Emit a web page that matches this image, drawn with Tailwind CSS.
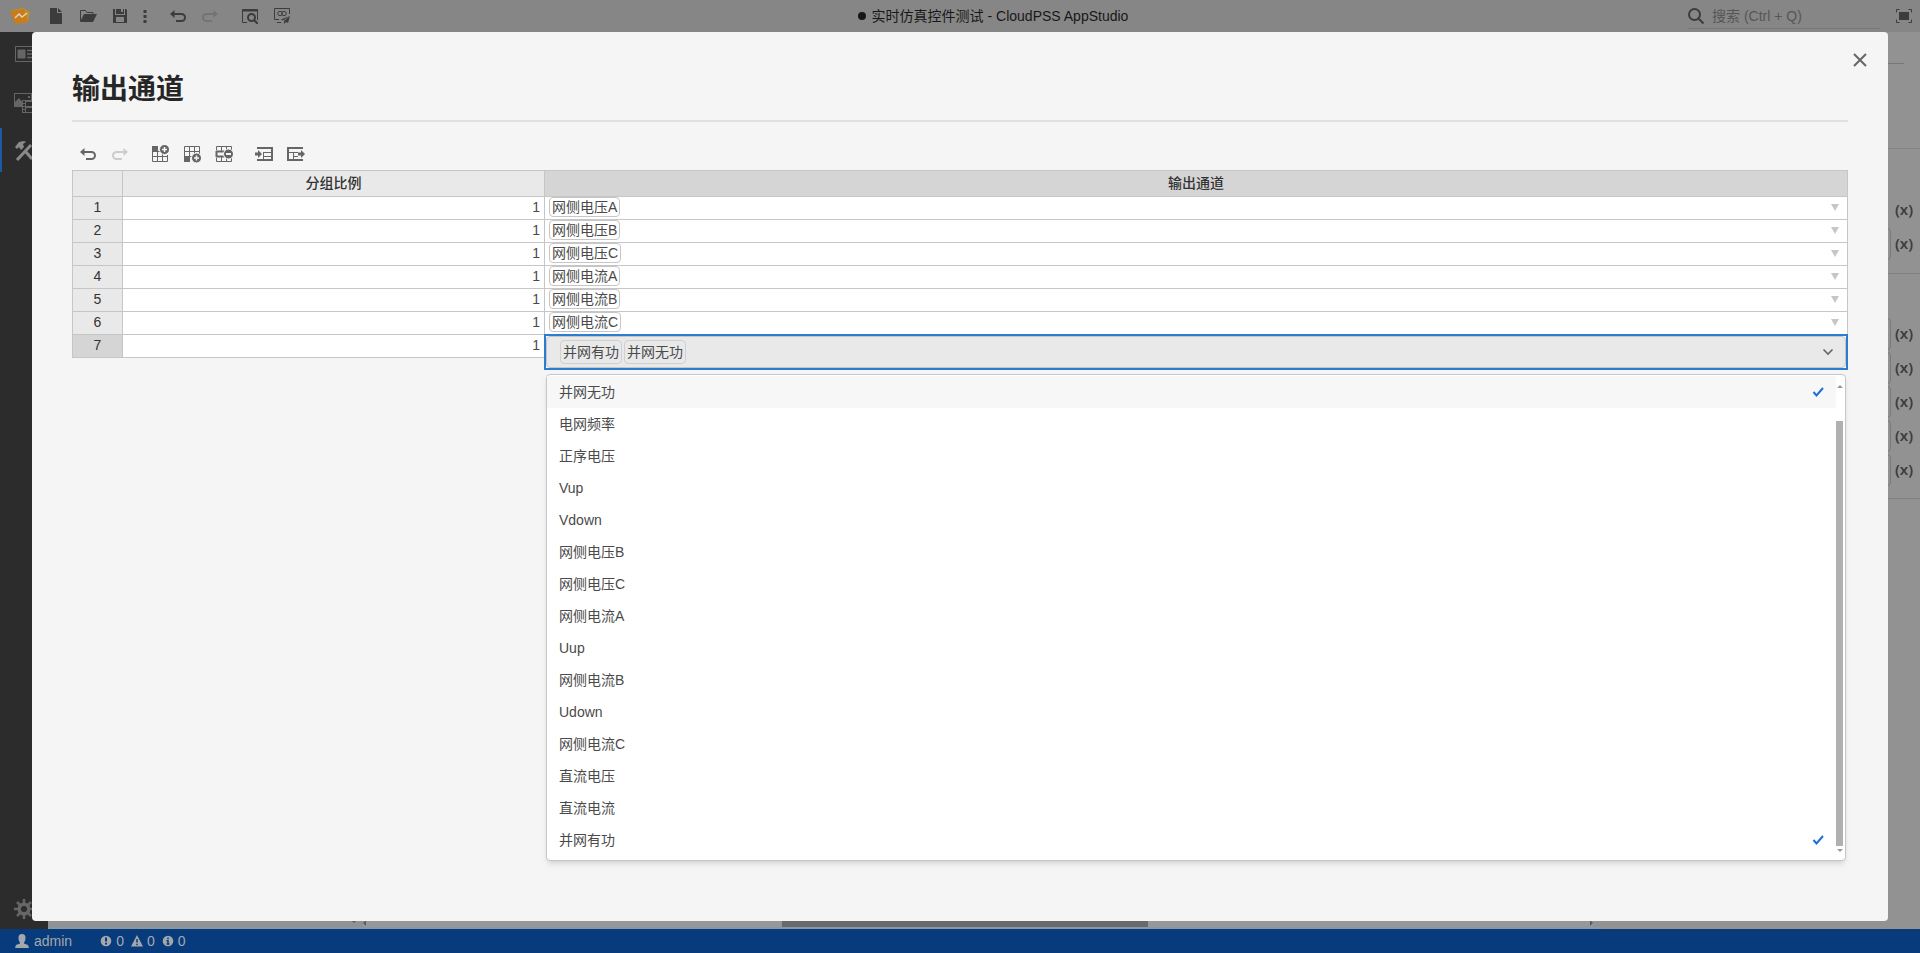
<!DOCTYPE html>
<html lang="zh-CN">
<head>
<meta charset="utf-8">
<meta name="viewport" content="width=device-width, initial-scale=1">
<title>实时仿真控件测试 - CloudPSS AppStudio</title>
<script src="https://cdn.jsdelivr.net/npm/@tailwindcss/browser@4"></script>
</head>
<body class="h-screen overflow-hidden flex flex-col bg-[#929292] text-sm text-[#333] font-['Liberation_Sans','Noto_Sans_CJK_SC',sans-serif]">

<svg class="hidden" aria-hidden="true">
  <symbol id="undo" viewBox="0 0 16 16"><path d="M0 6 4.500 2v8z" fill="currentColor"/><path d="M3 6h8.500a3.500 3.500 0 0 1 0 7H6" fill="none" stroke="currentColor" stroke-width="2"/></symbol>
</svg>

<header class="h-8 shrink-0 flex items-center bg-[#868686] text-[#3c3c3c]">
  <div class="w-10 flex justify-center">
    <svg class="w-5 h-5" viewBox="0 0 20 20"><path d="M2 4 13 2l7 4-2 10-12 2z" fill="#c08f2a"/><path d="M0 5 14 3l4 13-13 2z" fill="#c97c1a"/><path d="m5 12 4-4 3 3 5-4" fill="none" stroke="#e0d4bc" stroke-width="1.500"/></svg>
  </div>
  <button class="w-8 h-8 grid place-items-center" aria-label="新建"><svg class="w-4 h-4" viewBox="0 0 16 16" fill="currentColor"><path d="M2 0h7v5h5v11H2zM10 0l4 4h-4z"/></svg></button>
  <button class="w-8 h-8 grid place-items-center" aria-label="打开"><svg class="w-[18px] h-4" viewBox="0 0 18 16"><path d="M1.500 13V2.500h5l1.500 2h6V7" fill="none" stroke="currentColor"/><path d="M5 6h13l-4 8H1z" fill="currentColor"/></svg></button>
  <button class="w-8 h-8 grid place-items-center" aria-label="保存"><svg class="w-4 h-4" viewBox="0 0 16 16"><path fill="currentColor" fill-rule="evenodd" d="M1 1h2v6h10V1h1l1 1v13H1zM4 1h5v3h2V1h1v5H4zM4 9v5h8V9z"/></svg></button>
  <button class="w-[18px] h-8 grid place-items-center" aria-label="更多"><svg class="w-4 h-4" viewBox="0 0 16 16" fill="currentColor"><path d="M6.500 2h3v3h-3zM6.500 7h3v3h-3zM6.500 12h3v3h-3z"/></svg></button>
  <button class="ml-2 w-8 h-8 grid place-items-center" aria-label="撤销"><svg class="w-4 h-4"><use href="#undo"/></svg></button>
  <button class="w-8 h-8 grid place-items-center text-[#747474]" aria-label="重做"><svg class="w-4 h-4 -scale-x-100"><use href="#undo"/></svg></button>
  <button class="ml-2 w-8 h-8 grid place-items-center" aria-label="预览"><svg class="w-4 h-4" viewBox="0 0 16 16" fill="none" stroke="currentColor"><path d="M5 14.500H.5V1.500h15V12"/><path d="M0 2.500h16" stroke-width="2"/><circle cx="9.500" cy="9.500" r="3.500" stroke-width="2"/><path d="m12 12 4 4" stroke-width="2"/></svg></button>
  <button class="w-8 h-8 grid place-items-center" aria-label="发布"><svg class="w-4 h-4" viewBox="0 0 16 16" fill="none" stroke="currentColor"><path d="M5 11.500H.5V.5h15V6M3 14.500h4"/><circle cx="6" cy="5.500" r="2.200"/><circle cx="10" cy="5.500" r="2.200"/><path d="M16 8 7 11.500l2 1zM16 8l-6 5v3l2-2 2 1z" fill="currentColor" stroke="none"/></svg></button>
  <div class="flex-1 flex items-center justify-center gap-1.5 text-[#181818]"><span class="w-2 h-2 rounded-full bg-[#181818]"></span><h1>实时仿真控件测试 - CloudPSS AppStudio</h1></div>
  <label class="w-48 h-[25px] flex items-center gap-2 border-b border-[#7a7a7a]">
    <svg class="w-4 h-4 shrink-0" viewBox="0 0 16 16" fill="none" stroke="currentColor" stroke-width="2"><circle cx="6.500" cy="6.500" r="5.500"/><path d="m10.500 10.500 5 5"/></svg>
    <input class="w-full outline-none placeholder:text-[#565656]" placeholder="搜索 (Ctrl + Q)" aria-label="搜索">
  </label>
  <button class="ml-2 w-8 h-8 grid place-items-center" aria-label="全屏"><svg class="w-4 h-4" viewBox="0 0 16 16"><path d="M.5 4.500v-3h3M12.500 1.500h3v3M15.500 11.500v3h-3M3.500 14.500h-3v-3" fill="none" stroke="currentColor"/><path d="M3 4h10v8H3z" fill="currentColor"/></svg></button>
</header>

<div class="flex-1 min-h-0 flex">
  <nav class="w-12 shrink-0 flex flex-col gap-1 bg-[#2c2c2c] text-[#666]">
    <button class="h-11 grid place-items-center" aria-label="页面"><svg class="w-[18px] h-4" viewBox="0 0 18 16" fill="none" stroke="currentColor"><path d="M.5.5h17v15H.5z"/><path d="M3 4h7v8H3z" fill="currentColor"/><path d="M12 4.500h5M12 8h5M12 11.500h5" stroke-width="1.500"/></svg></button>
    <button class="h-11 pt-0.5 grid place-items-center" aria-label="资源"><svg class="w-5 h-[22px]" viewBox="0 0 20 22" fill="currentColor"><path d="M0 1h18v7h-1V2H1v13H0zM1 10l4-4 4 5-1 4H1zM14 4h2v2h-2z"/><path fill-rule="evenodd" d="M8 8h12v13H8zM9 9v2h2V9zM9 12v2h2v-2zM9 15v2h2v-2zM9 18v2h2v-2zM12 10v4h7v-4zM12 16v4h7v-4z"/></svg></button>
    <button class="h-11 pt-0.5 grid place-items-center border-l-2 border-[#1c5ba3] text-[#8a8a8a]" aria-label="工具"><svg class="w-5 h-5 mr-0.5" viewBox="0 0 20 20"><path d="M1 6 5 1l5-1 2 1-3 2 1 3-3 3-2-3-2 2z" fill="currentColor"/><path d="M3 19 17 4" fill="none" stroke="currentColor" stroke-width="3"/><path d="m12 11 6 7" fill="none" stroke="currentColor" stroke-width="3"/></svg></button>
    <button class="mt-auto h-10 grid place-items-center" aria-label="设置"><svg class="w-5 h-5" viewBox="0 0 20 20" fill="none" stroke="currentColor"><circle cx="10" cy="10" r="4.800" stroke-width="3.500"/><path d="M10 0v4M10 16v4M0 10h4M16 10h4M3 3l3 3M14 14l3 3M17 3l-3 3M3 17l3-3" stroke-width="2.500"/></svg></button>
  </nav>
  <main class="flex-1 flex flex-col justify-end">
    <div class="flex items-end border-b-2 border-[#8699a4]">
      <div class="w-[309px] flex justify-end pb-1"><span class="border-x-[3px] border-x-transparent border-t-[3px] border-t-[#5c5c5c]"></span></div>
      <div class="ml-1.5 mr-[7px] h-2 flex-1 flex items-center justify-between bg-[#989898]">
        <span class="border-y-[3px] border-y-transparent border-r-[3px] border-r-[#5c5c5c]"></span>
        <span class="ml-[416px] mr-auto w-[366px] h-full bg-[#6a6a6a]"></span>
        <span class="border-y-[3px] border-y-transparent border-l-[3px] border-l-[#5c5c5c]"></span>
      </div>
    </div>
  </main>
  <aside class="w-80 shrink-0 text-[#3c3c3c]" aria-label="属性">
    <div class="h-8 mr-4 border-b border-[#777]"></div>
    <div class="h-[85px] border-b border-[#858585]"></div>
    <div class="pt-[45px] h-[125px] border-b border-[#808080] flex flex-col gap-0.5">
      <div class="h-8 flex items-center justify-end pr-[7px]"><button class="text-[15px] font-semibold font-['Noto_Sans']">(x)</button></div>
      <div class="h-8 flex items-center gap-1 pr-[7px]"><input class="flex-1 h-8 rounded border border-[#7a7a7a]" aria-label="值"><button class="text-[15px] font-semibold font-['Noto_Sans']">(x)</button></div>
    </div>
    <div class="pt-11 pb-3 border-b border-[#808080] flex flex-col gap-0.5">
      <div class="h-8 flex items-center gap-1 pr-[7px]"><input class="flex-1 h-8 rounded border border-[#7a7a7a]" aria-label="值 1"><button class="text-[15px] font-semibold font-['Noto_Sans']">(x)</button></div>
      <div class="h-8 flex items-center gap-1 pr-[7px]"><input class="flex-1 h-8 rounded border border-[#7a7a7a]" aria-label="值 2"><button class="text-[15px] font-semibold font-['Noto_Sans']">(x)</button></div>
      <div class="h-8 flex items-center gap-1 pr-[7px]"><input class="flex-1 h-8 rounded border border-[#7a7a7a]" aria-label="值 3"><button class="text-[15px] font-semibold font-['Noto_Sans']">(x)</button></div>
      <div class="h-8 flex items-center gap-1 pr-[7px]"><input class="flex-1 h-8 rounded border border-[#7a7a7a]" aria-label="值 4"><button class="text-[15px] font-semibold font-['Noto_Sans']">(x)</button></div>
      <div class="h-8 flex items-center gap-1 pr-[7px]"><input class="flex-1 h-8 rounded border border-[#7a7a7a]" aria-label="值 5"><button class="text-[15px] font-semibold font-['Noto_Sans']">(x)</button></div>
    </div>
  </aside>
</div>

<footer class="h-6 shrink-0 flex items-center bg-[#083b7b] text-[#a3a8ae] pl-[15px]">
  <button class="flex items-center gap-[5px]"><svg class="w-[14px] h-[14px]" viewBox="0 0 14 14" fill="currentColor"><path d="M7 0c2.500 0 3.500 1.500 3.500 4S9.500 8 9 8.500v1l4 1.500 1 3H0l1-3 4-1.500v-1C4.500 8 3.500 6.500 3.500 4S4.500 0 7 0z"/></svg>admin</button>
  <button class="ml-7 flex items-center gap-[7px]">
    <span class="flex items-center gap-1"><svg class="w-3 h-3" viewBox="0 0 12 12"><circle cx="6" cy="6" r="5.300" fill="currentColor"/><path d="M6 2.500v4M6 7.700v1.800" stroke="#083b7b" stroke-width="2"/></svg>0</span>
    <span class="flex items-center gap-1"><svg class="w-3 h-3" viewBox="0 0 12 12"><path d="m6 0 6 11.500H0z" fill="currentColor"/><path d="M6 4v3.500M6 8.700v1.600" stroke="#083b7b" stroke-width="1.500"/></svg>0</span>
    <span class="flex items-center gap-1"><svg class="w-3 h-3" viewBox="0 0 12 12"><circle cx="6" cy="6" r="5.300" fill="currentColor"/><path d="M6 2.500v1.800M4.500 5.700H6v3M4.500 9h3" stroke="#083b7b" stroke-width="1.500" fill="none"/></svg>0</span>
  </button>
</footer>

<section role="dialog" aria-modal="true" aria-labelledby="dlg" class="fixed inset-8 rounded bg-[#f5f5f5] px-10 pt-10">
  <button class="absolute right-3 top-3 w-8 h-8 grid place-items-center text-[#666]" aria-label="关闭"><svg class="w-4 h-4" viewBox="0 0 16 16" fill="none" stroke="currentColor" stroke-width="2"><path d="m2 2 12 12M14 2 2 14"/></svg></button>
  <h2 id="dlg" class="h-[50px] border-b-2 border-[#e0e0e0] text-[28px] leading-9 font-bold text-[#262626]">输出通道</h2>
  <div class="mt-4 h-8 flex items-center text-[#666]">
    <button class="w-8 h-8 grid place-items-center" aria-label="撤销"><svg class="w-4 h-4"><use href="#undo"/></svg></button>
    <button class="w-8 h-8 grid place-items-center text-[#ccc]" aria-label="重做"><svg class="w-4 h-4 -scale-x-100"><use href="#undo"/></svg></button>
    <button class="ml-2 w-8 h-8 grid place-items-center" aria-label="在上方插入行"><svg class="w-[18px] h-[18px]" viewBox="0 0 18 18"><path d="M1.500 2v14.500h15V10M1 6.500h10M1 11.500h16M6.500 6v10M11.500 8v9" fill="none" stroke="currentColor"/><path d="M1 1h6v6H1z" fill="currentColor"/><circle cx="13.500" cy="4.500" r="5" fill="currentColor" stroke="#f5f5f5"/><path d="M13.500 2v5M11 4.500h5" stroke="#f5f5f5" stroke-width="1.500"/></svg></button>
    <button class="w-8 h-8 grid place-items-center" aria-label="在下方插入行"><svg class="w-[18px] h-[18px]" viewBox="0 0 18 18"><path d="M1.500 12V1.500h15V9M1 6.500h16M1 11.500h9M6.500 1v11M11.500 1v9" fill="none" stroke="currentColor"/><path d="M1 11h6v6H1z" fill="currentColor"/><circle cx="13.500" cy="13" r="5" fill="currentColor" stroke="#f5f5f5"/><path d="M13.500 10.500v5M11 13h5" stroke="#f5f5f5" stroke-width="1.500"/></svg></button>
    <button class="w-8 h-8 grid place-items-center" aria-label="删除行"><svg class="w-[18px] h-[18px]" viewBox="0 0 18 18"><path d="M1.500 5V1.500h15V5M1.500 13v3.500h15V13M6.500 1v5M11.500 1v4M6.500 12v5M11.500 13v4" fill="none" stroke="currentColor"/><path d="M1 6.500h8M1 11.500h8M1.500 6v6" fill="none" stroke="currentColor" stroke-width="2"/><circle cx="13.500" cy="9" r="5" fill="currentColor" stroke="#f5f5f5"/><path d="M11 9h5" stroke="#f5f5f5" stroke-width="2"/></svg></button>
    <button class="ml-2 w-8 h-8 grid place-items-center" aria-label="导入"><svg class="w-[18px] h-[18px]" viewBox="0 0 18 18"><path d="M2 3h15v12H2" fill="none" stroke="currentColor" stroke-width="2"/><path d="M8 7.500h9M8 11.500h9M8.500 7v7" fill="none" stroke="currentColor"/><path d="M0 7.500h3V5l4 4-4 4v-2.500H0z" fill="currentColor"/></svg></button>
    <button class="w-8 h-8 grid place-items-center" aria-label="导出"><svg class="w-[18px] h-[18px]" viewBox="0 0 18 18"><path d="M16 3H1v12h15" fill="none" stroke="currentColor" stroke-width="2"/><path d="M2 7.500h9M6 11.500h5M6.500 8v6" fill="none" stroke="currentColor"/><path d="M11 7.500h3V5l4 4-4 4v-2.500h-3z" fill="currentColor"/></svg></button>
  </div>

  <table class="w-full table-fixed border-collapse bg-white leading-5 text-[#4a4a4a]">
    <colgroup><col class="w-[50px]"><col class="w-[422px]"><col></colgroup>
    <thead><tr class="h-[26px] bg-[#e9e9e9] text-[#333]">
      <th class="border border-[#c6c6c6] p-0"></th>
      <th class="border border-[#c6c6c6] p-0 pb-0.5 font-medium">分组比例</th>
      <th class="border border-[#c6c6c6] p-0 pb-0.5 font-medium bg-[#d5d5d5]">输出通道</th>
    </tr></thead>
    <tbody id="rows"></tbody>
  </table>
</section>

<template id="row">
  <tr class="h-[23px]">
    <th class="border border-[#c6c6c6] p-0 align-top font-normal bg-[#e9e9e9] text-[#333]"></th>
    <td class="border border-[#c6c6c6] py-0 pl-0 pr-1 align-top text-right"></td>
    <td class="border border-[#c6c6c6] p-0 align-top"><div class="flex items-center justify-between pl-1 pr-2"><span class="h-5 leading-[18px] rounded border border-[#c6c6c6] px-0.5"></span><span class="border-x-4 border-x-transparent border-t-[7px] border-t-[#c6c6c6]"></span></div></td>
  </tr>
</template>
<template id="editing">
  <tr class="h-[23px]">
    <th class="border border-[#c6c6c6] p-0 align-top font-normal bg-[#d5d5d5] text-[#333]">7</th>
    <td class="border border-[#c6c6c6] py-0 pl-0 pr-1 align-top text-right">1</td>
    <td class="p-0 align-top"><div class="relative h-[22px]">
      <div class="absolute -left-px right-0 -top-px">
        <button aria-haspopup="listbox" aria-expanded="true" class="w-full h-9 border-2 border-[#2b7cd3] bg-white flex">
          <span class="w-full h-8 rounded border border-[#c6c6c6] bg-[#e9e9e9] flex items-center gap-0.5 pl-[13px] pr-[11px]">
            <span class="h-6 leading-[22px] rounded border border-[#d0d0d0] px-0.5">并网有功</span>
            <span class="h-6 leading-[22px] rounded border border-[#d0d0d0] px-0.5">并网无功</span>
            <svg class="ml-auto w-3 h-3 text-[#666]" viewBox="0 0 12 12" fill="none" stroke="currentColor" stroke-width="1.600"><path d="m1.500 3.500 4.500 4.500 4.500-4.500"/></svg>
          </span>
        </button>
        <div class="mt-1 mx-0.5 flex rounded border border-[#c6c6c6] bg-white shadow-md">
          <ul id="options" role="listbox" aria-multiselectable="true" class="flex-1 pt-px pb-1"></ul>
          <div class="w-[9px] pr-px pt-2.5 pb-2 flex flex-col items-center" aria-hidden="true">
            <span class="border-x-[3px] border-x-transparent border-b-[3px] border-b-[#999]"></span>
            <span class="mt-[33px] flex-1 w-[7px] bg-[#b0b0b0]"></span>
            <span class="mt-[3px] border-x-[3px] border-x-transparent border-t-[3px] border-t-[#999]"></span>
          </div>
        </div>
      </div>
    </div></td>
  </tr>
</template>
<template id="option">
  <li role="option" class="h-8 flex items-center justify-between pl-3 pr-3 aria-selected:first:bg-[#f7f7f7]"><span></span><svg class="w-3 h-3 text-[#1b6fdb]" viewBox="0 0 12 12" fill="none" stroke="currentColor" stroke-width="2"><path d="m1.500 6 3 3.500L11 2"/></svg></li>
</template>
<script>
  const rows = document.getElementById('rows');
  ['网侧电压A', '网侧电压B', '网侧电压C', '网侧电流A', '网侧电流B', '网侧电流C'].forEach((name, i) => {
    const r = document.getElementById('row').content.cloneNode(true);
    r.querySelector('th').textContent = i + 1;
    r.querySelector('td').textContent = '1';
    r.querySelector('td + td span').textContent = name;
    rows.append(r);
  });
  rows.append(document.getElementById('editing').content.cloneNode(true));
  const selected = ['并网无功', '并网有功'];
  ['并网无功', '电网频率', '正序电压', 'Vup', 'Vdown', '网侧电压B', '网侧电压C', '网侧电流A', 'Uup', '网侧电流B', 'Udown', '网侧电流C', '直流电压', '直流电流', '并网有功'].forEach(name => {
    const o = document.getElementById('option').content.cloneNode(true);
    const on = selected.includes(name);
    o.querySelector('li').setAttribute('aria-selected', on);
    o.querySelector('span').textContent = name;
    if (!on) o.querySelector('svg').remove();
    document.getElementById('options').append(o);
  });
</script>
</body>
</html>
